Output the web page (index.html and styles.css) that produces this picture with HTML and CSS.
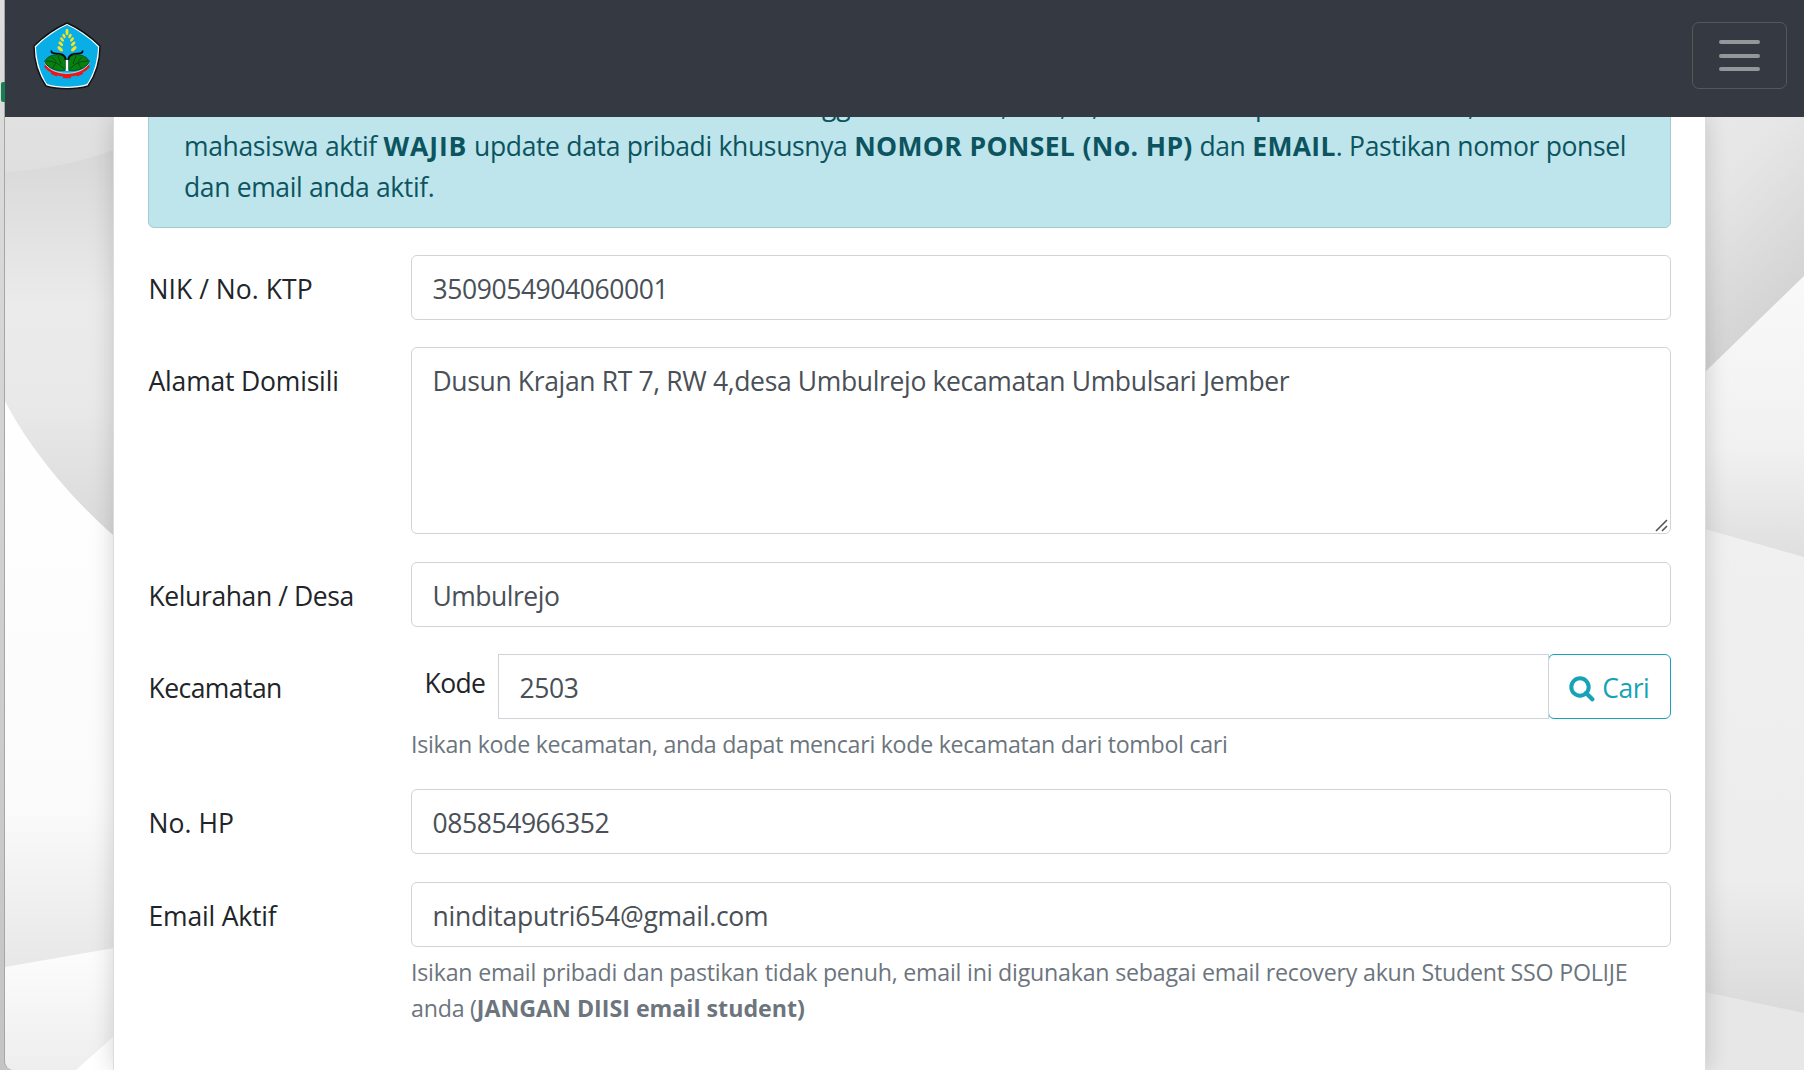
FILE: index.html
```html
<!DOCTYPE html>
<html lang="id">
<head>
<meta charset="utf-8">
<title>Update Data Pribadi</title>
<link rel="stylesheet" href="styles.css">
</head>
<body>
<span class="edge-tab"></span>
<div class="window">
  <svg class="backdrop" viewBox="5 117 1799 953" preserveAspectRatio="none" aria-hidden="true">
    <defs>
      <linearGradient id="a" x2="0" y2="1"><stop offset="0" stop-color="#e1e1e1"/><stop offset="1" stop-color="#dadada"/></linearGradient>
      <linearGradient id="b" x2="0" y2="1"><stop offset="0" stop-color="#d8d8d8"/><stop offset=".15" stop-color="#dfdfdf"/><stop offset=".4" stop-color="#ebebeb"/><stop offset=".65" stop-color="#e9e9e9"/><stop offset="1" stop-color="#d9d9d9"/></linearGradient>
      <linearGradient id="c" x2="0" y2="1"><stop offset="0" stop-color="#fff"/><stop offset=".7" stop-color="#fbfbfb"/><stop offset="1" stop-color="#e6e6e6"/></linearGradient>
      <linearGradient id="d" x2="0" y2="1"><stop offset="0" stop-color="#fdfdfd"/><stop offset="1" stop-color="#eee"/></linearGradient>
      <linearGradient id="e" x2=".4" y2="1"><stop offset="0" stop-color="#e9e9e9"/><stop offset=".3" stop-color="#e6e6e6"/><stop offset="1" stop-color="#d0d0d0"/></linearGradient>
      <linearGradient id="f" x2="0" y2="1"><stop offset="0" stop-color="#f9f9f9"/><stop offset=".6" stop-color="#f1f1f1"/><stop offset="1" stop-color="#dedede"/></linearGradient>
      <linearGradient id="g" x2="0" y2="1"><stop offset="0" stop-color="#f0f0f0"/><stop offset=".7" stop-color="#ededed"/><stop offset="1" stop-color="#d8d8d8"/></linearGradient>
    </defs>
    <path fill="url(#a)" d="M5 117H900V300H5z"/>
    <path fill="url(#b)" d="M5 172C45 170 80 162 114 150V540H5z"/>
    <path fill="url(#c)" d="M5 401C25 440 62 490 114 536V960L5 980z"/>
    <path fill="url(#d)" d="M5 967L114 948V1070H5z"/>
    <path fill="#fff" d="M76 1070L114 1036V1070z"/>
    <path fill="url(#e)" d="M1700 117H1804V380H1700z"/>
    <path fill="url(#f)" d="M1705 372L1804 276V562H1705z"/>
    <path fill="url(#g)" d="M1705 529L1804 557V1030H1705z"/>
    <path fill="#e7e7e7" d="M1705 992L1804 1013V1070H1705z"/>
  </svg>
  <header class="navbar">
    <svg class="logo" viewBox="0 0 68 68" role="img" aria-label="Logo">
      <path d="M34 1C43 5 57 14 67 24C67 40 62 54 55 64C43 67.500 25 67.500 13 64C6 54 1 40 1 24C11 14 25 5 34 1z" fill="#fff" stroke="#111" stroke-width="1.500"/>
      <path d="M34 3C43 7 56 15.500 65 25C64.500 40 60 53 54 62C43 65.500 25 65.500 14 62C8 53 3.500 40 3 25C12 15.500 25 7 34 3z" fill="#09aee6"/>
      <g fill="#f4e320">
        <ellipse cx="34" cy="10" rx="1.500" ry="3.200"/>
        <g id="grain"><ellipse cx="31" cy="14" rx="1.300" ry="2.300" transform="rotate(-32 31 14)"/><ellipse cx="29" cy="17.500" rx="1.400" ry="2.600" transform="rotate(-38 29 17.500)"/><ellipse cx="27.800" cy="21.800" rx="1.500" ry="2.900" transform="rotate(-45 27.800 21.800)"/><ellipse cx="27.200" cy="26.800" rx="1.600" ry="3.400" transform="rotate(-45 27.200 26.800)"/></g>
        <use href="#grain" transform="matrix(-1 0 0 1 68 0)"/>
      </g>
      <path d="M13 42.500C19 57 49 57 55 42.500" fill="none" stroke="#f01414" stroke-width="3"/>
      <path d="M12 44l5 4.500M18.500 50.500l6 2.500M30 54.800h8M43.500 53l6-2.500M51 48.500l5-4.500" stroke="#f01414" stroke-width="3"/>
      <path d="M11.500 40C17 55 51 55 56.500 40L54 38H14z" fill="#09aee6" stroke="#e6f2f8" stroke-width=".7"/>
      <path id="leaf" d="M11.500 39.500C15 33 24 31 30 34C33 36 33 42 32 48.500C24 49.500 15 46.500 11.500 39.500z" fill="#078012" stroke="#053b08" stroke-width=".8"/>
      <use href="#leaf" transform="matrix(-1 0 0 1 68 0)"/>
      <path d="M13 39C21 39 27 42 31 47M19 35l4 4.500M25 34l3 8M20 46l3-5.500M55 39C47 39 41 42 37 47M49 35l-4 4.500M43 34l-3 8M48 46l-3-5.500" fill="none" stroke="#053b08" stroke-width=".7"/>
      <path d="M18.300 28.500C18 35 31 27 33 38M49.700 28.500C50 35 37 27 35 38" fill="none" stroke="#050505" stroke-width="1.700"/>
      <path d="M32.800 38h2.400v11h-2.400z" fill="#fff"/>
    </svg>
    <button class="toggler" type="button" aria-label="Menu"><span></span><span></span><span></span></button>
  </header>
  <main class="card">
    <div class="alert">
      <p class="prev-line"><span></span><span>hingga</span><span>,</span><span>,</span><span>,</span><span>p</span><span>,</span></p>
      <p class="l1">mahasiswa aktif <b>WAJIB</b> update data pribadi khususnya <b>NOMOR PONSEL (No. HP)</b> dan <b>EMAIL</b>. Pastikan nomor ponsel</p>
      <p>dan email anda aktif.</p>
    </div>
    <div class="row"><label class="caps">NIK / No. KTP</label><div class="field"><div class="control num">3509054904060001</div></div></div>
    <div class="row"><label class="medium">Alamat Domisili</label><div class="field"><div class="control area">Dusun Krajan RT 7, RW 4,desa Umbulrejo kecamatan Umbulsari Jember<svg class="grip" viewBox="0 0 14 14"><path d="M1 13L12 2M7 13l5-5" stroke="#555" stroke-width="1.600" fill="none"/></svg></div></div></div>
    <div class="row"><label>Kelurahan / Desa</label><div class="field"><div class="control name">Umbulrejo</div></div></div>
    <div class="row"><label class="tight">Kecamatan</label><div class="field">
      <div class="group"><span class="prefix">Kode</span><div class="control num square">2503</div><button class="search" type="button"><svg viewBox="0 0 26 26"><circle cx="11" cy="11" r="8.700" fill="none" stroke="currentColor" stroke-width="4"/><path d="M17 17l6.300 6.300" stroke="currentColor" stroke-width="4.300" stroke-linecap="round"/></svg><span>Cari</span></button></div>
      <p class="hint">Isikan kode kecamatan, anda dapat mencari kode kecamatan dari tombol cari</p></div></div>
    <div class="row phone"><label class="caps">No. HP</label><div class="field"><div class="control num">085854966352</div></div></div>
    <div class="row"><label class="medium">Email Aktif</label><div class="field"><div class="control mail">ninditaputri654@gmail.com</div>
      <p class="hint wide">Isikan email pribadi dan pastikan tidak penuh, email ini digunakan sebagai email recovery akun Student SSO POLIJE</p><p class="hint wide">anda (<b>JANGAN DIISI email student)</b></p></div></div>
  </main>
</div>
</body>
</html>
```
FILE: styles.css
```css
* { box-sizing: border-box; }
body { margin: 0; height: 1070px; overflow: hidden; padding-left: 4px; background: linear-gradient(#dedede, #c4c4c4); font: 26.5px/41px "Open Sans", "Noto Sans", sans-serif; color: #212529; position: relative; }
p { margin: 0; white-space: nowrap; }
.edge-tab { position: absolute; z-index: 1; left: 1px; top: 82px; width: 4px; height: 20px; border-radius: 2px 0 0 2px; background: #188050; }
.window { position: relative; height: 1070px; border-left: 1px solid #a6a6a6; border-bottom-left-radius: 9px; overflow: hidden; display: flex; flex-direction: column; }
.backdrop { position: absolute; left: 0; top: 117px; width: 1799px; height: 953px; }
.navbar { position: relative; z-index: 2; flex: none; height: 117px; padding: 22px 17px 28px 27.500px; background: #353941; display: flex; justify-content: space-between; align-items: flex-start; }
.logo { width: 68px; height: 68px; }
.toggler { width: 95px; height: 67px; border: 1px solid #575756; border-radius: 7px; background: none; padding: 0; display: flex; flex-direction: column; align-items: center; justify-content: center; gap: 9.500px; }
.toggler span { width: 41px; height: 4px; border-radius: 2px; background: #94979a; }
.card { position: relative; flex: 1; margin: 0 98px 0 108px; padding: 0 34px; border: solid #dcdcdc; border-width: 0 1px; background: #fff; box-shadow: 0 0 22px rgba(0,0,0,.17); }
.alert { height: 147px; margin-top: -36px; padding: 3px 0 0 35px; background: #bee5eb; border: 1px solid #a3cbd2; border-radius: 6px; color: #0c5460; margin-bottom: 27px; letter-spacing: -.36px; }
.alert b { letter-spacing: .33px; }
.alert .l1 { word-spacing: .2px; }
.alert .l1 b:first-child { letter-spacing: .9px; }
.prev-line { display: grid; grid-template-columns: 600px 217px 59px 32px 163px 213px 30px; height: 41px; }
.row { display: grid; grid-template-columns: 263px 1fr; margin-bottom: 27px; }
label { padding: 14px 0 0 .5px; height: 60px; letter-spacing: -.4px; }
label.caps { letter-spacing: .05px; }
label.medium { letter-spacing: -.18px; }
label.tight { letter-spacing: -.55px; }
.control { position: relative; height: 65px; padding: 13px 20.500px; border: 1px solid #ced4da; border-radius: 6px; background: #fff; color: #495057; white-space: nowrap; letter-spacing: -.355px; }
.num { letter-spacing: -.42px; }
.name { letter-spacing: -.5px; }
.mail { letter-spacing: -.25px; }
.area { height: 187px; margin-bottom: 1px; }
.phone { margin-bottom: 28px; }
.grip { position: absolute; right: 1px; bottom: 1px; width: 14px; height: 14px; }
.square { flex: 1; border-radius: 0; }
.group { display: flex; }
.prefix { width: 87px; padding: 9px 0 0 13.500px; letter-spacing: -.6px; }
.search { width: 123px; margin-left: -1px; padding: 0 1px 0 0; border: 1px solid #17a2b8; border-radius: 6px; background: #fff; color: #17a2b8; font: inherit; letter-spacing: -.5px; display: flex; align-items: center; justify-content: center; gap: 7.500px; }
.search svg { width: 26px; height: 26px; margin-top: 4px; }
.search span { padding-top: 3px; }
.hint { font-size: 23.200px; line-height: 36px; color: #6c757d; letter-spacing: -.285px; }
.hint.wide { letter-spacing: -.22px; }
.hint b { letter-spacing: 0; }
.control + .hint, .group + .hint { margin-top: 7px; }
```
